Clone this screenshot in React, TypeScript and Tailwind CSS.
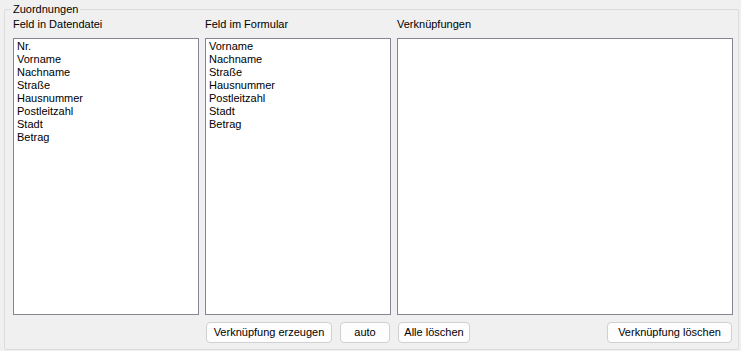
const felderDatei = ["Nr.", "Vorname", "Nachname", "Straße", "Hausnummer", "Postleitzahl", "Stadt", "Betrag"];
const felderFormular = ["Vorname", "Nachname", "Straße", "Hausnummer", "Postleitzahl", "Stadt", "Betrag"];

function ListBox({ items }: { items: string[] }) {
  return (
    <div className="h-[277px] border border-[#828790] bg-white px-[3px] pt-[1px]">
      {items.map((item) => (
        <div key={item} className="h-[13px] leading-[13px]">
          {item}
        </div>
      ))}
    </div>
  );
}

function Btn({ label, className = "" }: { label: string; className?: string }) {
  return (
    <button
      type="button"
      className={`h-[21px] rounded-[4px] border border-[#d0d0d0] bg-[#fdfdfd] leading-[19px] text-black ${className}`}
    >
      {label}
    </button>
  );
}

export default function App() {
  return (
    <div
      className="h-[351px] w-[741px] bg-[#f0f0f0] pl-[4px] pr-[3px] pt-[2px] text-[11px] text-black"
      style={{ fontFamily: '"Liberation Sans", Arial, sans-serif' }}
    >
      <fieldset className="h-[348px] rounded-[2px] border border-[#dcdcdc] pl-[8px] pr-[5px]">
        <legend className="-ml-[2px] px-[2px] leading-[14px]">Zuordnungen</legend>

        <div className="mt-[1px] grid grid-cols-[186px_186px_336px] gap-x-[6px]">
          <div className="h-[21px] pt-[1px] leading-[13px]">Feld in Datendatei</div>
          <div className="h-[21px] pt-[1px] leading-[13px]">Feld im Formular</div>
          <div className="h-[21px] pt-[1px] leading-[13px]">Verknüpfungen</div>

          <ListBox items={felderDatei} />
          <ListBox items={felderFormular} />
          <div className="h-[277px] border border-[#828790] bg-white" />

          <div />
          <div className="mt-[7px] flex justify-between px-[1px]">
            <Btn label="Verknüpfung erzeugen" className="w-[126px]" />
            <Btn label="auto" className="w-[50px]" />
          </div>
          <div className="mt-[7px] flex justify-between px-[1px]">
            <Btn label="Alle löschen" className="w-[72px]" />
            <Btn label="Verknüpfung löschen" className="w-[125px]" />
          </div>
        </div>
      </fieldset>
    </div>
  );
}
